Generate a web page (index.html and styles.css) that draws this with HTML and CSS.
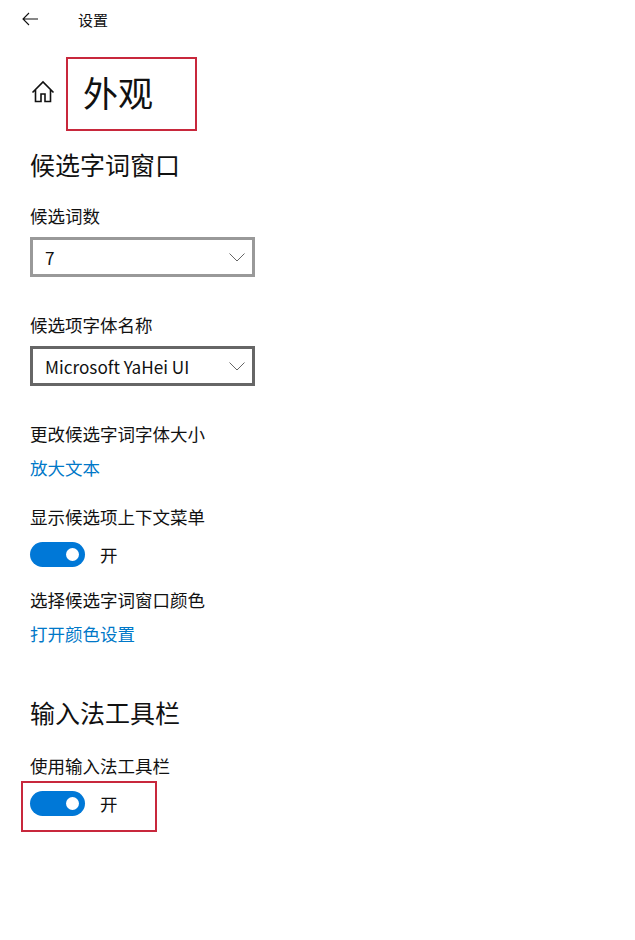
FILE: index.html
```html
<!DOCTYPE html>
<html lang="zh-CN">
<head>
    <meta charset="UTF-8">
    <title>设置</title>
    <link rel="stylesheet" href="styles.css">
</head>
<body>
    <div class="topbar">
        <svg class="back" width="16" height="14" viewBox="0 0 16 14"><path d="M7 1 1 7l6 6M1 7h15" fill="none" stroke="#111" stroke-width="1.1"/></svg>
        <span class="topbar-title">设置</span>
    </div>
    <div class="page">
        <div class="title-row">
            <svg class="home" width="24" height="24" viewBox="0 0 24 24"><path d="M1.500 12.500 12 2l10.500 10.500M4.500 10v11.500h5.500V14h4v7.500h5.500V10" fill="none" stroke="#111" stroke-width="1.600"/></svg>
            <h1>外观</h1>
            <div class="mark mark-title"></div>
        </div>

        <h2>候选字词窗口</h2>

        <div class="label first">候选词数</div>
        <div class="select">
            <span>7</span>
            <svg width="16" height="9" viewBox="0 0 16 9"><path d="M.5.5 8 8 15.500.5" fill="none" stroke="#666" stroke-width="1"/></svg>
        </div>

        <div class="label font-label">候选项字体名称</div>
        <div class="select dark">
            <span>Microsoft YaHei UI</span>
            <svg width="16" height="9" viewBox="0 0 16 9"><path d="M.5.5 8 8 15.500.5" fill="none" stroke="#666" stroke-width="1"/></svg>
        </div>

        <div class="label size-label">更改候选字词字体大小</div>
        <a class="link" href="#">放大文本</a>

        <div class="label menu-label">显示候选项上下文菜单</div>
        <div class="toggle-row">
            <div class="toggle"><div class="knob"></div></div>
            <span>开</span>
        </div>

        <div class="label color-label">选择候选字词窗口颜色</div>
        <a class="link" href="#">打开颜色设置</a>

        <h2 class="toolbar-head">输入法工具栏</h2>

        <div class="label toolbar-label">使用输入法工具栏</div>
        <div class="toggle-row toolbar-toggle">
            <div class="toggle"><div class="knob"></div></div>
            <span>开</span>
            <div class="mark mark-toggle"></div>
        </div>
    </div>
</body>
</html>
```

FILE: styles.css
```css
body {
    margin: 0;
    min-height: 940px;
    background: #fff;
    color: #111;
    font-family: "Noto Sans CJK SC", "Noto Sans", sans-serif;
    font-size: 17.5px;
}
.topbar {
    display: flex;
    align-items: center;
    height: 38px;
    padding-left: 22px;
}
.topbar-title {
    margin-left: 40px;
    font-size: 15px;
}
.page {
    padding-left: 30px;
}
.title-row {
    position: relative;
    display: flex;
    align-items: center;
    height: 106px;
    padding-top: 2px;
    box-sizing: border-box;
}
.home {
    margin-left: 1px;
}
h1 {
    margin: 0 0 0 28px;
    font-size: 35px;
    font-weight: 400;
    line-height: 50px;
}
h2 {
    margin: 0;
    font-size: 25px;
    font-weight: 400;
    line-height: 40px;
    height: 40px;
}
.label {
    line-height: 26px;
    height: 26px;
}
.first { margin-top: 19px; }
.font-label { margin-top: 35px; }
.size-label { margin-top: 35px; }
.menu-label { margin-top: 23px; }
.color-label { margin-top: 20px; }
.toolbar-label { margin-top: 21px; }
.select {
    display: flex;
    align-items: center;
    justify-content: space-between;
    box-sizing: border-box;
    width: 225px;
    height: 40px;
    margin-top: 8px;
    padding: 0 7px 0 12px;
    border: 3px solid #999;
    font-size: 17.2px;
}
.select.dark {
    border-color: #666;
}
.link {
    display: block;
    margin-top: 8px;
    line-height: 26px;
    height: 26px;
    color: #0078c8;
    text-decoration: none;
}
.toggle-row {
    position: relative;
    display: flex;
    align-items: center;
    height: 26px;
    margin-top: 11px;
}
.toggle {
    display: flex;
    align-items: center;
    justify-content: flex-end;
    box-sizing: border-box;
    width: 55px;
    height: 25px;
    padding-right: 6px;
    border-radius: 13px;
    background: #0078d7;
}
.knob {
    width: 13px;
    height: 13px;
    border-radius: 50%;
    background: #fff;
}
.toggle-row span {
    margin-left: 15px;
}
.toolbar-head {
    margin-top: 45px;
}
/* red annotation boxes drawn over the screenshot */
.mark {
    position: absolute;
    box-sizing: border-box;
    border: 2px solid #c8283c;
}
.mark-title {
    left: 36px;
    top: 19px;
    width: 131px;
    height: 74px;
}
.mark-toggle {
    left: -9px;
    top: -9px;
    width: 136px;
    height: 51px;
}
```
